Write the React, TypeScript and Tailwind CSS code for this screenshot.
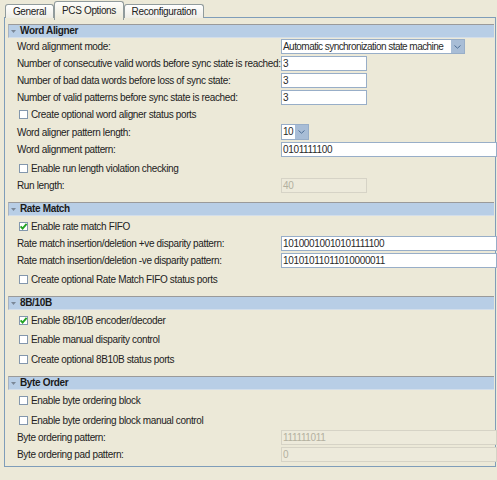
import React from "react";

function Triangle() {
  return (
    <svg width="5" height="3" viewBox="0 0 5 3" className="shrink-0">
      <path d="M0 0 H5 L2.5 3 Z" fill="#7b8898" />
    </svg>
  );
}

function Header({ title }: { title: string }) {
  return (
    <div className="ml-[3px] mr-[1px] flex h-[14px] shrink-0 items-center border-t border-l border-b border-t-[#9a9a9a] border-l-[#a8b4c2] border-b-[#d3deea] bg-[#b8cee6] pl-[2px]">
      <Triangle />
      <span className="ml-[4px] font-bold leading-none text-[#1a1a1a]">{title}</span>
    </div>
  );
}

function Chevron() {
  return (
    <svg width="7" height="4" viewBox="0 0 7 4">
      <path d="M0.5 0.5 L3.5 3.2 L6.5 0.5" fill="none" stroke="#4f6f95" strokeWidth="1" />
    </svg>
  );
}

function Select({ value, width, height = "h-[15px]" }: { value: string; width: string; height?: string }) {
  return (
    <div className={`flex ${width} ${height} shrink-0 border border-[#98aec8] bg-white`}>
      <span className="flex-1 overflow-hidden whitespace-nowrap pl-[1px] leading-[13px] tracking-[-0.55px] text-[#2a2a2a]">
        {value}
      </span>
      <div className="flex w-[13px] shrink-0 items-center justify-center bg-[#a8bdd6]">
        <Chevron />
      </div>
    </div>
  );
}

function Input({ value, width, disabled }: { value: string; width: string; disabled?: boolean }) {
  return (
    <div
      className={`h-[15px] ${width} shrink-0 border pl-[1px] leading-[13px] ${
        disabled
          ? "border-[#d6d3c6] bg-[#edeadb] text-[#b3b09f]"
          : "border-[#98aec8] bg-white text-[#2a2a2a]"
      }`}
    >
      {value}
    </div>
  );
}

function Field({
  label,
  children,
  className = "",
}: {
  label: string;
  children: React.ReactNode;
  className?: string;
}) {
  return (
    <div className={`flex shrink-0 items-center pl-[12px] ${className}`}>
      <span className="w-[264px] shrink-0 whitespace-nowrap">{label}</span>
      {children}
    </div>
  );
}

function Check({
  label,
  checked,
  className = "",
}: {
  label: string;
  checked?: boolean;
  className?: string;
}) {
  return (
    <div className={`flex shrink-0 items-center pl-[14px] ${className}`}>
      <div className="relative h-[9px] w-[9px] shrink-0 border border-[#8397ad] bg-white">
        {checked && (
          <svg
            width="9"
            height="9"
            viewBox="0 0 9 9"
            className="absolute left-[-1px] top-[-1px]"
          >
            <path d="M1.6 4.4 L3.6 6.6 L7.6 1.8" fill="none" stroke="#22a322" strokeWidth="1.9" />
          </svg>
        )}
      </div>
      <span className="ml-[3px] whitespace-nowrap">{label}</span>
    </div>
  );
}

function Tab({ label, selected, width }: { label: string; selected?: boolean; width: string }) {
  if (selected) {
    return (
      <div
        className={`relative z-10 flex ${width} h-[19px] items-center justify-center self-start mt-[1px] rounded-t-[3px] border border-b-0 border-[#919b9c] bg-gradient-to-b from-[#fdfdfb] to-[#ece9d8] pb-[2px]`}
      >
        {label}
      </div>
    );
  }
  return (
    <div
      className={`flex ${width} h-[14px] items-center justify-center self-end rounded-t-[3px] border border-b-0 border-[#919b9c] bg-gradient-to-b from-[#ffffff] to-[#eeede6]`}
    >
      {label}
    </div>
  );
}

export default function App() {
  return (
    <div className="h-[480px] w-[497px] overflow-hidden bg-[#ece9d8] font-['Liberation_Sans',Arial,sans-serif] text-[10px] tracking-[-0.35px] text-[#222]">
      <div className="flex h-[18px] items-end pl-[5px]">
        <Tab label="General" width="w-[49px]" />
        <Tab label="PCS Options" width="w-[70px]" selected />
        <Tab label="Reconfiguration" width="w-[80px]" />
      </div>

      <div className="-mt-px ml-[4px] flex h-[450px] w-[492px] flex-col border border-[#7f9db9] pt-[6px]">
        <Header title="Word Aligner" />
        <Field label="Word alignment mode:" className="mt-[1px] h-[15px]">
          <Select value="Automatic synchronization state machine" width="w-[184px]" />
        </Field>
        <Field label="Number of consecutive valid words before sync state is reached:" className="mt-[2px] h-[15px]">
          <Input value="3" width="w-[86px]" />
        </Field>
        <Field label="Number of bad data words before loss of sync state:" className="mt-[2px] h-[15px]">
          <Input value="3" width="w-[86px]" />
        </Field>
        <Field label="Number of valid patterns before sync state is reached:" className="mt-[2px] h-[15px]">
          <Input value="3" width="w-[86px]" />
        </Field>
        <Check label="Create optional word aligner status ports" className="h-[19px]" />
        <Field label="Word aligner pattern length:" className="h-[16px]">
          <Select value="10" width="w-[28px]" height="h-[16px]" />
        </Field>
        <Field label="Word alignment pattern:" className="mt-[2px] h-[15px]">
          <Input value="0101111100" width="w-[216px]" />
        </Field>
        <Check label="Enable run length violation checking" className="mt-[1px] h-[20px]" />
        <Field label="Run length:" className="h-[15px]">
          <Input value="40" width="w-[86px]" disabled />
        </Field>

        <div className="mt-[9px]">
          <Header title="Rate Match" />
        </div>
        <Check label="Enable rate match FIFO" checked className="h-[20px]" />
        <Field label="Rate match insertion/deletion +ve disparity pattern:" className="h-[15px]">
          <Input value="10100010010101111100" width="w-[216px]" />
        </Field>
        <Field label="Rate match insertion/deletion -ve disparity pattern:" className="mt-[2px] h-[15px]">
          <Input value="10101011011010000011" width="w-[216px]" />
        </Field>
        <Check label="Create optional Rate Match FIFO status ports" className="h-[22px]" />

        <div className="mt-[6px]">
          <Header title="8B/10B" />
        </div>
        <Check label="Enable 8B/10B encoder/decoder" checked className="h-[20px]" />
        <Check label="Enable manual disparity control" className="h-[19px]" />
        <Check label="Create optional 8B10B status ports" className="h-[20px]" />

        <div className="mt-[7px]">
          <Header title="Byte Order" />
        </div>
        <Check label="Enable byte ordering block" className="h-[20px]" />
        <Check label="Enable byte ordering block manual control" className="h-[20px]" />
        <Field label="Byte ordering pattern:" className="h-[15px]">
          <Input value="111111011" width="w-[216px]" disabled />
        </Field>
        <Field label="Byte ordering pad pattern:" className="mt-[2px] h-[15px]">
          <Input value="0" width="w-[216px]" disabled />
        </Field>
      </div>
    </div>
  );
}
